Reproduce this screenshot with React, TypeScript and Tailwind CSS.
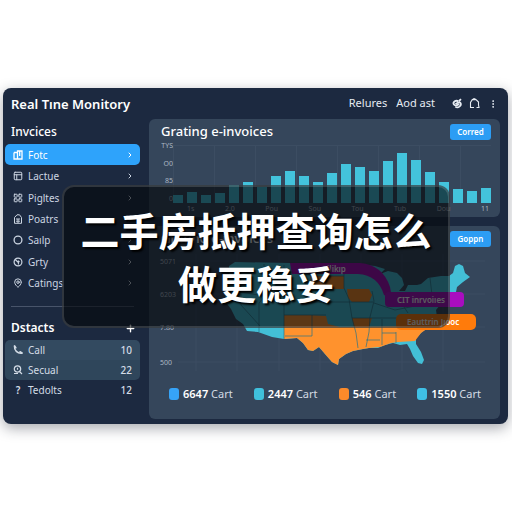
import React from 'react';
import { ChevronRight, LayoutGrid, MapPin, MoreVertical, PanelsTopLeft, Plus } from 'lucide-react';

type IconProps = { size?: number; strokeWidth?: number };

const ReportIcon = ({ size = 10 }: IconProps) => (
  <svg width={size} height={size} viewBox="0 0 10 10" fill="none" stroke="currentColor">
    <path d="M1 2.5V9H9V1H4.5V9M1 2.5H4.5M6.7 1V6" strokeWidth="1.3" />
  </svg>
);

const LockIcon = ({ size = 10 }: IconProps) => (
  <svg width={size} height={size} viewBox="0 0 10 10" fill="none" stroke="currentColor">
    <path d="M1.5 9.3V3.5L4 .8H6.5L8.5 3.5V9.3ZM3 5H7M3 7.2H7M5 5V9" />
  </svg>
);

const RingIcon = ({ size = 10 }: IconProps) => (
  <svg width={size} height={size} viewBox="0 0 10 10" fill="none" stroke="currentColor">
    <circle cx="5" cy="5" r="3.9" strokeWidth="1.3" />
  </svg>
);

const DialIcon = ({ size = 10 }: IconProps) => (
  <svg width={size} height={size} viewBox="0 0 10 10" fill="none" stroke="currentColor">
    <circle cx="5" cy="5" r="3.9" strokeWidth="1.2" />
    <path d="M2.2 2.5L5.4 5.6V7.5M5 3.6L6.5 5" strokeWidth="1.1" />
  </svg>
);

const HandsetIcon = () => (
  <svg width="10" height="10" viewBox="0 0 10 10" fill="none" stroke="currentColor">
    <path d="M1.5 1.2C1 5 4.5 8.8 8.8 8.2" strokeWidth="1.5" strokeLinecap="round" />
    <path d="M1.6 1L2.8 2.8M7 6.8L9 8" strokeWidth="1.6" strokeLinecap="round" />
  </svg>
);

const LensIcon = () => (
  <svg width="10" height="10" viewBox="0 0 10 10" fill="none" stroke="currentColor">
    <circle cx="4.5" cy="4" r="3.2" strokeWidth="1.2" />
    <path d="M6 6L9 9M1 8.5H5M4.5 2.8V4.8" strokeWidth="1.2" />
  </svg>
);

const ChainIcon = () => (
  <svg width="12" height="12" viewBox="0 0 12 12" fill="none" stroke="currentColor" strokeWidth="1.8">
    <path d="M7.5 3.5C5 1.5 1.5 4 2.8 6.4C3.7 8 6.5 7.4 8 5.8" />
    <path d="M4.3 8.6C7 10.6 10.8 7.8 9.6 5.2C8.8 3.8 6 4.6 4.6 6.2M8 3L10 1.2" />
  </svg>
);

const TagIcon = () => (
  <svg width="11" height="11" viewBox="0 0 11 11" fill="none" stroke="currentColor" strokeWidth="1.1">
    <path d="M1.5 9.5V4.5L3.3 1.6H7L9.5 4V7L10 9.5H7.5M1 9.5H5M3.3 1.6L5 .6L7 1.6" />
  </svg>
);

const navItems = [
  { label: 'Fotc', icon: ReportIcon, active: true },
  { label: 'Lactue', icon: PanelsTopLeft },
  { label: 'Pigltes', icon: LayoutGrid },
  { label: 'Poatrs', icon: LockIcon },
  { label: 'Saılp', icon: RingIcon },
  { label: 'Grty', icon: DialIcon },
  { label: 'Catings', icon: MapPin },
];

const bars = [8, 11, 8, 10, 18, 21, 16, 27, 32, 27, 21, 30, 39, 36, 32, 42, 50, 43, 31, 21, 14, 12, 15];
const months = ['1s', '2.0', 'Pou', 'Sou', 'Tou', 'Tub', 'Dou', '11'];

const legend = [
  { value: '6647', color: 'bg-[#36a3f7]' },
  { value: '2447', color: 'bg-[#3fc0dc]' },
  { value: '546', color: 'bg-[#fb8a2a]' },
  { value: '1550', color: 'bg-[#3fc0e6]' },
];

const Sidebar = () => (
  <aside className="w-[146px] shrink-0 pl-[2px] pr-[9px]">
    <h1 className="pl-[6px] h-8 leading-8 text-[13px] font-semibold text-white whitespace-nowrap">Real Tıne Monitory</h1>
    <h2 className="pl-[6px] h-6 leading-6 text-[12px] font-medium text-white">Invcices</h2>
    <nav className="grid grid-rows-7 h-[150px]">
      {navItems.map(({ label, icon: Icon, active }) => (
        <a
          key={label}
          href="#"
          className={`flex items-center gap-[5px] pl-2 pr-[6px] rounded-[5px] text-[10px] leading-4 ${active ? 'bg-[#2ea3fb] text-white' : 'text-[#ccd5e2]'}`}
        >
          <Icon size={10} strokeWidth={2.4} />
          <span className="flex-1">{label}</span>
          <ChevronRight size={8} strokeWidth={3} />
        </a>
      ))}
    </nav>
    <div className="mx-[6px] mt-3 h-px bg-[#48546a]"></div>
    <div className="flex items-center justify-between h-6 mt-[9px] pl-[6px] pr-1">
      <h2 className="text-[12px] font-semibold text-white">Dstacts</h2>
      <button type="button" aria-label="Add" className="text-white"><Plus size={11} strokeWidth={3} /></button>
    </div>
    <ul className="text-[10px] text-[#d3dce6]">
      <li className="flex items-center gap-[5px] h-5 pl-2 pr-2 rounded-t-[5px] bg-[#334a60]">
        <HandsetIcon /><span className="flex-1">Call</span><span className="font-medium">10</span>
      </li>
      <li className="flex items-center gap-[5px] h-5 pl-2 pr-2 rounded-b-[5px] bg-[#2f465b]">
        <LensIcon /><span className="flex-1">Secual</span><span className="font-medium">22</span>
      </li>
      <li className="flex items-center gap-[5px] h-5 pl-2 pr-2">
        <span className="w-[10px] text-center font-semibold">?</span><span className="flex-1">Tedolts</span><span className="font-medium">12</span>
      </li>
    </ul>
  </aside>
);

const TopLinks = () => (
  <header className="flex items-center justify-end h-[31px] pr-[2px] text-[11px] text-[#e6ebf2]">
    <a href="#" className="mr-[9px]">Relures</a>
    <a href="#" className="mr-4">Aod ast</a>
    <button type="button" aria-label="Link" className="mr-[6px]"><ChainIcon /></button>
    <button type="button" aria-label="Tag" className="mr-2"><TagIcon /></button>
    <button type="button" aria-label="More"><MoreVertical size={10} strokeWidth={2.4} /></button>
  </header>
);

const CardHead = ({ title, action }: { title: string; action: string }) => (
  <div className="flex items-center justify-between h-[26px] pl-3 pr-[9px]">
    <h3 className="text-[13px] font-medium text-white">{title}</h3>
    <button type="button" className="w-[41px] h-4 rounded-[3px] bg-[#2c9df4] text-[8px] leading-4 font-semibold text-white">{action}</button>
  </div>
);

const BarCard = () => (
  <section className="rounded-[6px] bg-[#35465b] h-[98px]">
    <CardHead title="Grating e-invoices" action="Corred" />
    <div className="flex pl-2 pr-[9px]">
      <div className="w-4 h-[61px] -mt-[3px] flex flex-col justify-between text-right text-[7px] leading-[8px] text-[#aab6c4]">
        <span>TYS</span><span>O0</span><span>85</span><span>0</span>
      </div>
      <div className="flex-1">
        <div className="flex items-end justify-between h-[58px] border-t border-[#3c4d62] bg-[linear-gradient(90deg,#3c4d62_1px,transparent_1px)] bg-[length:41px_100%]">
          {bars.map((h, i) => (
            <div key={i} className="w-[10px] bg-[#43c3dc]" style={{ height: h }}></div>
          ))}
        </div>
        <div className="flex justify-between pl-[14px] pr-[2px] pt-[2px] text-[7px] leading-[8px] text-[#aab6c4]">
          {months.map((m) => <span key={m}>{m}</span>)}
        </div>
      </div>
    </div>
  </section>
);

const UsMap = () => (
  <svg viewBox="149 253 351 122" className="block w-full">
    <g stroke="#3c4d62" strokeWidth="1">
      <path d="M178 262H485M178 295H485M178 328H485M178 363H485M196 255V372M237 255V372M279 255V372M320 255V372M361 255V372M402 255V372M443 255V372" />
    </g>
    <path
      fill="#43bfd6"
      d="M235 263L290 264L345 264L375 267L385 270L380 275L388 272L397 274L402 279L404 286L399 292L405 292L408 286L417 286L421 285L428 279L441 277L449 277L453 274L455 267L459 265L463 267L465 274L470 278L463 283L457 288L456 293L458 295L451 297L449 300L440 306L436 311L437 318L432 325L422 333L416 339L416 345L421 353L424 361L422 365L418 364L413 357L410 350L407 345L400 346L393 344L385 346L378 349L369 349L363 350L353 352L346 355L339 360L338 366L332 363L325 355L319 348L313 352L308 351L303 344L297 339L284 340L272 338L258 333L247 332L243 325L236 320L231 310L225 302L226 290L229 278L229 267Z"
    />
    <path
      fill="#ff922d"
      d="M284 316L311 316L326 317L328 325L340 328L431 327L421 334L415 342L398 343L391 344L380 348L369 349L363 350L353 352L346 355L339 360L338 366L332 363L325 355L319 348L313 352L308 351L303 344L297 339L284 340Z"
    />
    <path fill="#f58622" d="M310 277H344V290H317L312 286ZM347 290H369L372 296L369 303H352L348 299ZM352 319H372L369 328H354Z" />
    <path
      fill="none"
      stroke="#2a7387"
      strokeWidth="0.7"
      d="M264 265V298L259 304V333M229 291L264 297M241 295V306L260 327M284 266V340M264 297H284M284 316H326M311 265V303M284 290H312M264 280H284M311 303H347M312 337V316M312 337H285M311 277H344M344 265V289L349 300L352 319L356 334L358 349M347 303H373M352 319H420M372 292L374 302L370 318L369 333L366 348M374 304L395 311L420 306M382 320V346M396 333V344M366 341H380M382 334H396M402 305L408 314M430 279L432 296"
    />
    <path d="M290 264H360Q383 266 390 288L392 299L384 296Q378 276 358 275H292Z" fill="#a508b4" />
    <rect x="385" y="293" width="79" height="15" rx="4" fill="#a90dc0" />
    <rect x="396" y="315" width="80" height="16" rx="5" fill="#ff7b0b" />
    <g fontSize="8" fontWeight="600" fill="#fff">
      <text x="322" y="273">Cilikıp</text>
      <text x="397" y="304">CIT inrvoiıes</text>
      <text x="407" y="326">Eauttrin Jıooc</text>
    </g>
    <g fontSize="7" fill="#aab6c4">
      <text x="160" y="265">5071</text>
      <text x="160" y="298">6203</text>
      <text x="160" y="331">7.80</text>
      <text x="160" y="366">500</text>
    </g>
  </svg>
);

const MapCard = () => (
  <section className="mt-[9px] rounded-[6px] bg-[#35465b]">
    <CardHead title="Grating e-invoices" action="Goppn" />
    <UsMap />
    <div className="flex justify-between pl-5 pr-[19px] pt-3 pb-[17px] text-[11px] leading-4 text-[#d3dae3]">
      {legend.map(({ value, color }) => (
        <div key={value} className="flex items-center gap-1">
          <i className={`w-[10px] h-3 rounded-[3px] ${color}`}></i>
          <span><b className="font-semibold text-white">{value}</b> Cart</span>
        </div>
      ))}
    </div>
  </section>
);

const App = () => {
  return (
    <main className="min-h-screen bg-white pt-[88px] pl-[3px] pr-1 pb-4 font-['Noto_Sans','Noto_Sans_CJK_SC',sans-serif]">
      <div className="relative flex rounded-lg bg-[#1c2940] shadow-[0_4px_14px_rgba(30,35,50,0.4)]">
        <Sidebar />
        <div className="flex-1 min-w-0 pr-2 pb-[5px]">
          <TopLinks />
          <BarCard />
          <MapCard />
        </div>
        <div className="absolute left-[59px] right-[58px] top-[97px] h-[143px] rounded-xl border-2 border-white/15 bg-[#05070a]/65 flex items-center justify-center">
          <p className="text-center text-[39px] leading-[53px] font-bold text-white [text-shadow:2px_2px_2px_#000]">
            二手房抵押查询怎么<br />做更稳妥
          </p>
        </div>
      </div>
    </main>
  );
};

export default App;
